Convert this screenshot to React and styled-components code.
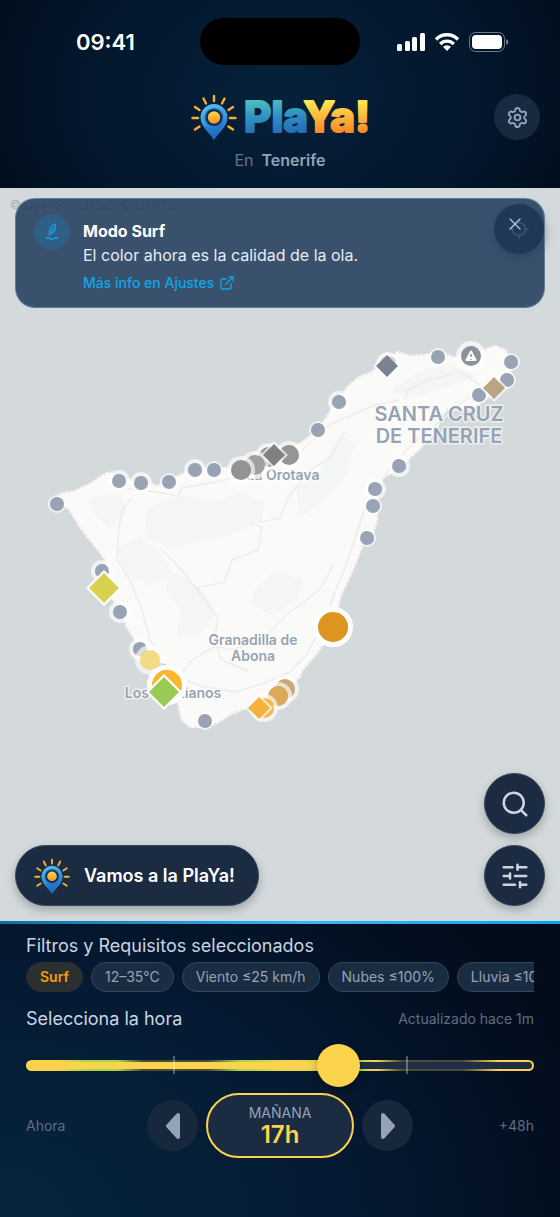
import React, { useState } from 'react';
import styled, { createGlobalStyle, css } from 'styled-components';
import { ExternalLink, Locate, Search, Settings, SlidersHorizontal, X } from 'lucide-react';

const GlobalStyle = createGlobalStyle`
    * {
        box-sizing: border-box;
    }

    body {
        margin: 0;
        background: #020c1b;
        font-family: Inter, 'Liberation Sans', sans-serif;
    }

    button {
        margin: 0;
        padding: 0;
        border: none;
        font-family: inherit;
        cursor: pointer;
    }
`;

const Screen = styled.div`
    display: flex;
    flex-direction: column;
    min-height: 100vh;
`;

const Header = styled.header`
    padding: 18px 20px 16px;
    background: radial-gradient(ellipse 60% 140% at 50% 50%, #06213a 0%, #03162c 60%, #020c1b 100%);
`;

const StatusBar = styled.div`
    display: grid;
    grid-template-columns: 1fr 160px 1fr;
    align-items: center;
    color: #ffffff;
`;

const Clock = styled.span`
    padding-left: 56px;
    font-size: 22px;
    font-weight: 600;
`;

const Notch = styled.div`
    height: 47px;
    border-radius: 24px;
    background: #000000;
`;

const StatusIcons = styled.div`
    display: flex;
    align-items: center;
    gap: 9px;
    padding-left: 37px;
`;

const TitleBar = styled.div`
    display: grid;
    grid-template-columns: 1fr auto 1fr;
    align-items: center;
    margin-top: 29px;
`;

const Brand = styled.h1`
    grid-column: 2;
    display: flex;
    align-items: center;
    gap: 6px;
    margin: 0;
`;

const BrandWord = styled.svg`
    font-family: Inter, 'Liberation Sans', sans-serif;
    font-size: 42px;
    font-weight: 800;
    stroke-width: 2px;
    stroke-linejoin: round;
    overflow: visible;
`;

const GearButton = styled.button`
    justify-self: end;
    display: flex;
    align-items: center;
    justify-content: center;
    width: 46px;
    height: 46px;
    border-radius: 50%;
    background: #172a40;
    color: #94a3b8;
`;

const Place = styled.p`
    display: flex;
    justify-content: center;
    gap: 8px;
    margin: 8px 0 0;
    font-size: 16px;
    line-height: 24px;
    color: #64748b;

    strong {
        font-weight: 600;
        color: #94a3b8;
    }
`;

const MapArea = styled.main`
    position: relative;
    flex: 1;
    display: flex;
    flex-direction: column;
    justify-content: space-between;
    min-height: 640px;
    padding: 10px 15px 15px;
    background: #d4d9dc;
    overflow: hidden;
`;

const MapCanvas = styled.svg`
    position: absolute;
    inset: 0;
    width: 100%;
    height: 100%;
`;

const MapLabel = styled.text`
    font-size: ${({ $size }) => $size}px;
    font-weight: 600;
    fill: #96a4b2;
    stroke: rgba(255, 255, 255, 0.6);
    stroke-width: 3px;
    stroke-linejoin: round;
    paint-order: stroke;
    text-anchor: middle;
`;

const Attribution = styled.small`
    position: absolute;
    top: 9px;
    left: 10px;
    font-size: 12px;
    line-height: 16px;
    color: #a8b0b6;
`;

const LocateButton = styled.button`
    position: absolute;
    top: 16px;
    right: 16px;
    display: flex;
    align-items: center;
    justify-content: center;
    width: 50px;
    height: 50px;
    border-radius: 50%;
    background: #1a2b42;
    color: #cbd5e1;
    box-shadow: 0 4px 12px rgba(0, 0, 0, 0.4);
`;

const Notice = styled.section`
    position: relative;
    display: flex;
    gap: 13px;
    padding: 15px 19px 12px 18px;
    border: 1px solid rgba(125, 155, 185, 0.6);
    border-radius: 20px;
    background: rgba(33, 58, 92, 0.86);
`;

const NoticeIcon = styled.span`
    display: flex;
    align-items: center;
    justify-content: center;
    width: 36px;
    height: 36px;
    border-radius: 50%;
    background: #2f5f85;
`;

const NoticeBody = styled.div`
    flex: 1;
`;

const NoticeTitle = styled.h2`
    margin: 5px 0 0;
    font-size: 16px;
    font-weight: 700;
    line-height: 24px;
    color: #ffffff;
`;

const NoticeText = styled.p`
    margin: 0;
    font-size: 16px;
    line-height: 24px;
    color: #e8edf3;
`;

const NoticeLink = styled.a`
    display: inline-flex;
    align-items: center;
    gap: 5px;
    margin-top: 4px;
    font-size: 14px;
    font-weight: 500;
    line-height: 24px;
    color: #0ea5e9;
    text-decoration: none;
`;

const CloseButton = styled.button`
    display: flex;
    align-items: center;
    justify-content: center;
    width: 20px;
    height: 20px;
    background: transparent;
    color: #b6c2d1;
`;

const MapActions = styled.div`
    position: relative;
    display: flex;
    align-items: flex-end;
    justify-content: space-between;
`;

const ActionStack = styled.div`
    display: flex;
    flex-direction: column;
    gap: 11px;
`;

const floating = css`
    display: flex;
    align-items: center;
    justify-content: center;
    height: 61px;
    border: 1px solid #34465b;
    background: #1a2b42;
    box-shadow: 0 4px 10px rgba(0, 0, 0, 0.25);
`;

const RoundButton = styled.button`
    ${floating}
    width: 61px;
    border-radius: 50%;
    color: #cbd5e1;
`;

const GoButton = styled.button`
    ${floating}
    gap: 14px;
    padding: 0 23px 0 18px;
    border-radius: 31px;
    font-size: 18px;
    font-weight: 600;
    color: #ffffff;
`;

const Panel = styled.footer`
    padding: 10px 26px 59px;
    border-top: 3px solid #1593d4;
    border-image: linear-gradient(90deg, #0b6fa8, #38b6f5 55%, #0ea5e9) 1;
    background: radial-gradient(ellipse 110% 150% at 0% 100%, #06263d 0%, #051a33 55%, #020c1b 100%);
`;

const PanelTitle = styled.h2`
    margin: 0;
    font-size: 18px;
    font-weight: 400;
    line-height: 24px;
    color: #cbd5e1;
`;

const Chips = styled.ul`
    display: flex;
    gap: 8px;
    margin: 4px 0 15px;
    padding: 0;
    list-style: none;
    overflow: hidden;
`;

const Chip = styled.li`
    flex: none;
    height: 30px;
    padding: 0 13px;
    border: 1px solid ${({ $active }) => ($active ? '#2a2f30' : '#36475a')};
    border-radius: 15px;
    background: ${({ $active }) => ($active ? '#2a2f30' : '#1a2c41')};
    font-size: 14px;
    font-weight: ${({ $active }) => ($active ? 600 : 400)};
    line-height: 28px;
    color: ${({ $active }) => ($active ? '#f59e0b' : '#94a3b8')};
`;

const PanelRow = styled.div`
    display: flex;
    align-items: center;
    justify-content: space-between;
`;

const Muted = styled.span`
    font-size: 14px;
    line-height: 20px;
    color: #5f6e84;
`;

const SliderBox = styled.div`
    display: grid;
    align-items: center;
    height: 44px;
    margin: 12px 0 6px;

    > * {
        grid-area: 1 / 1;
    }
`;

const Track = styled.div`
    height: 11px;
    padding: 2px;
    border-radius: 6px;
    background: linear-gradient(
        90deg,
        #fcd34d 6%,
        #a3d64e 12%,
        #a3d64e 18%,
        #4a4c38 23%,
        #4a4c38 36%,
        #a3d64e 42%,
        #fcd34d 52%,
        #a3d64e 65%,
        #fcd34d 69%,
        #4a4c38 74%,
        #4a4c38 86%,
        #fcd34d 93%,
        #fcd34d 100%
    );
`;

const TrackInner = styled.div`
    height: 7px;
    border-radius: 4px;
    background: linear-gradient(90deg, #fcd34d 10px, #1f2e45 10px);
    overflow: hidden;
`;

const TrackFill = styled.div`
    height: 100%;
    background: #fcd34d;
`;

const Ticks = styled.div`
    position: relative;
    height: 18px;
    margin: 0 21px;
`;

const Tick = styled.span`
    position: absolute;
    top: 0;
    width: 2px;
    height: 18px;
    background: rgba(255, 255, 255, 0.3);
`;

const Range = styled.input`
    position: relative;
    appearance: none;
    width: 100%;
    height: 44px;
    margin: 0;
    background: transparent;

    &::-webkit-slider-thumb {
        appearance: none;
        width: 43px;
        height: 43px;
        border-radius: 50%;
        background: #fcd34d;
        box-shadow: 0 2px 8px rgba(0, 0, 0, 0.3);
    }
`;

const Stepper = styled.div`
    display: flex;
    align-items: center;
    gap: 8px;
`;

const StepButton = styled.button`
    display: flex;
    align-items: center;
    justify-content: center;
    width: 51px;
    height: 51px;
    border-radius: 50%;
    background: #17283d;
`;

const Current = styled.output`
    display: flex;
    flex-direction: column;
    align-items: center;
    justify-content: center;
    width: 148px;
    height: 65px;
    border: 2px solid #fcd34d;
    border-radius: 33px;
    background: #1a2b42;
`;

const Day = styled.span`
    font-size: 14px;
    line-height: 18px;
    color: #94a3b8;
`;

const Hour = styled.span`
    font-size: 24px;
    font-weight: 600;
    line-height: 26px;
    color: #fcd34d;
`;

const Side = styled(Muted)`
    flex: 1;
    text-align: ${({ $right }) => ($right ? 'right' : 'left')};
`;

const ISLAND =
    'M57 500L60 494L75 491L90 484L100 477L109 472L118 479L140 482L158 486L170 480L183 474L195 469L214 469' +
    'L240 466L262 458L285 450L300 444L315 432L325 420L336 402L347 388L358 378L370 373L385 362L398 352L410 356' +
    'L425 355L440 352L455 358L470 351L485 350L495 346L505 350L513 362L509 378L497 391L482 402L470 409L447 410' +
    'L440 418L437 430L426 442L413 455L400 467L382 479L376 493L377 520L373 533L363 543L357 560L348 580L340 597' +
    'L338 610L333 630L317 653L302 670L300 677L280 693L260 703L233 713L217 723L203 727L190 727L182 720L178 703' +
    'L168 685L160 670L150 657L137 643L127 627L121 611L113 600L106 584L107 562L98 550L90 540L80 527L70 510Z';

const WOODS = [
    'M150 510L180 498L215 505L240 495L262 503L258 520L230 532L200 538L170 545L148 535Z',
    'M120 550L140 540L158 556L170 572L150 582L128 572Z',
    'M168 575L185 580L200 592L212 612L200 630L180 634L184 610L170 592Z',
    'M258 590L275 575L300 582L296 597L272 612L255 603Z',
    'M300 490L325 470L340 440L352 444L342 476L318 502L302 512Z',
    'M396 390L420 374L450 368L470 376L440 386L412 394Z',
    'M92 500L118 497L124 512L110 524L98 514Z',
];

const ROADS = [
    'M110 487L140 490L158 492L178 496L182 488L215 482L245 476L275 466L300 452L330 425L352 415L375 405L400 400',
    'M132 498L122 510L118 535L117 560L130 580L142 610L150 640L162 660L178 676L200 686L235 692L262 684L290 672' +
        'L306 655L324 622L336 590L348 560L356 535L366 505L392 465L412 445L436 425L460 404L494 380',
    'M250 522L262 528L258 550L232 560L224 582L196 588L180 568L160 548',
    'M196 588L218 618L214 640L222 660L250 672',
    'M405 400L408 390L430 380L460 372L480 385',
    'M180 676L192 660L215 646L232 650L262 640L290 612L320 590L333 565',
    'M260 522L280 518L288 498L310 470L330 458L345 432',
];

const Pin = ({ id, size }) => (
    <svg width={size} height={size} viewBox="0 0 46 46" aria-hidden="true">
        <defs>
            <linearGradient id={`${id}-body`} x1="0" y1="0" x2="0.3" y2="1">
                <stop offset="0" stopColor="#5cc8ee" />
                <stop offset="0.5" stopColor="#3a9be0" />
                <stop offset="1" stopColor="#1e6fc4" />
            </linearGradient>
            <linearGradient id={`${id}-sun`} x1="0" y1="0" x2="0" y2="1">
                <stop offset="0" stopColor="#ffd447" />
                <stop offset="1" stopColor="#f7932a" />
            </linearGradient>
        </defs>
        <path
            d="M23 2V7M12.5 4.5L15 9.5M33.5 4.5L31 9.5M4 13L8.5 16M42 13L37.5 16M1.5 24H7M44.5 24H39M4 35.5L8.5 32.5M42 35.5L37.5 32.5"
            stroke="#fbb02d"
            strokeWidth="2.4"
            strokeLinecap="round"
        />
        <path d="M23 46C19 39 9.5 33 9.5 23.5A13.5 13.5 0 0 1 36.5 23.5C36.5 33 27 39 23 46Z" fill={`url(#${id}-body)`} />
        <path d="M12 31C18 35 27 34 32 29C33 33 26 38 23 46C20 40 14 36 12 31Z" fill="#1d63b8" opacity="0.35" />
        <circle cx="23" cy="23.5" r="9.5" fill="#1f63b0" />
        <circle cx="23" cy="23.5" r="8" fill="#0b2545" />
        <circle cx="23" cy="23.5" r="6.2" fill={`url(#${id}-sun)`} />
    </svg>
);

const Wordmark = () => (
    <BrandWord width="126" height="46" viewBox="0 0 126 46">
        <defs>
            <linearGradient id="sea" x1="0" y1="0" x2="0.2" y2="1">
                <stop offset="0.2" stopColor="#4cc0c0" />
                <stop offset="0.5" stopColor="#2f93c4" />
                <stop offset="0.9" stopColor="#2268b4" />
            </linearGradient>
            <linearGradient id="sand" x1="0" y1="0" x2="0" y2="1">
                <stop offset="0.2" stopColor="#ffe650" />
                <stop offset="0.8" stopColor="#fb8a24" />
            </linearGradient>
        </defs>
        <text x="1" y="38">
            <tspan fill="url(#sea)" stroke="url(#sea)">Pla</tspan>
            <tspan fill="url(#sand)" stroke="url(#sand)">Ya!</tspan>
        </text>
    </BrandWord>
);

const SurfIcon = () => (
    <svg width="16" height="18" viewBox="0 0 16 18" fill="none" stroke="#0ea5e9" strokeWidth="1.3" strokeLinecap="round" strokeLinejoin="round">
        <path d="M11 1C7 2.5 4.5 7 5.5 12C10 10 12.5 6 11 1ZM9.5 5L7 9.5" />
        <path d="M2 15.5Q4 14 6 15.5T10 15.5T14 15.5" />
    </svg>
);

// x, y, width of the white ring
const smallDots = [
    [57, 504, 2], [119, 481, 4], [141, 483, 4], [169, 482, 2], [195, 470, 4], [214, 470, 2], [318, 430, 2],
    [339, 402, 4], [438, 357, 2], [511, 362, 2], [507, 380, 2], [479, 395, 2], [399, 466, 4], [375, 489, 4],
    [373, 506, 2], [367, 538, 2], [102, 571, 4], [120, 612, 4], [140, 649, 4], [161, 670, 2], [205, 721, 2],
];

const Dot = ({ x, y, r = 7, ring = 2, color = '#98a3b4', ringOpacity = 0.65 }) => (
    <g>
        <circle cx={x} cy={y} r={r + ring / 2} fill="none" stroke="#ffffff" strokeWidth={ring} opacity={ringOpacity} />
        <circle cx={x} cy={y} r={r} fill={color} />
    </g>
);

const Diamond = ({ x, y, r, ring = 3, color, ringOpacity = 0.65 }) => (
    <g>
        <path
            d={`M${x} ${y - r - ring}L${x + r + ring} ${y}L${x} ${y + r + ring}L${x - r - ring} ${y}Z`}
            fill="#ffffff"
            opacity={ringOpacity}
        />
        <path d={`M${x} ${y - r}L${x + r} ${y}L${x} ${y + r}L${x - r} ${y}Z`} fill={color} />
    </g>
);

const IslandMap = () => (
    <MapCanvas viewBox="0 188 560 733" preserveAspectRatio="xMidYMid slice" role="img" aria-label="Tenerife">
        <path d={ISLAND} fill="#fafaf8" stroke="#fafaf8" strokeWidth="2" strokeLinejoin="round" />
        <path d={ISLAND} fill="none" stroke="#e9bcbc" strokeWidth="1" strokeDasharray="2 3" opacity="0.7" />
        {WOODS.map((d) => (
            <path key={d} d={d} fill="#f4f6f4" stroke="#f4f6f4" strokeWidth="6" strokeLinejoin="round" />
        ))}
        {ROADS.map((d) => (
            <path key={d} d={d} fill="none" stroke="#ebeded" strokeWidth="1.5" strokeLinejoin="round" />
        ))}
        <MapLabel x="439" y="421" $size={20}>SANTA CRUZ</MapLabel>
        <MapLabel x="439" y="443" $size={20}>DE TENERIFE</MapLabel>
        <MapLabel x="283" y="480" $size={14}>La Orotava</MapLabel>
        <MapLabel x="253" y="645" $size={14}>Granadilla de</MapLabel>
        <MapLabel x="253" y="661" $size={14}>Abona</MapLabel>
        <MapLabel x="173" y="698" $size={14}>Los Cristianos</MapLabel>

        {smallDots.map(([x, y, ring]) => (
            <Dot key={`${x}-${y}`} x={x} y={y} ring={ring} />
        ))}
        <Dot x={289} y={455} r={10} ring={4} color="#959595" />
        <Dot x={269} y={457} r={10} ring={4} color="#8c8c8c" />
        <Dot x={255} y={465} r={10} ring={4} color="#a0a0a0" />
        <Dot x={241} y={470} r={10} ring={4} color="#939393" />
        <Diamond x={274} y={455} r={11} color="#808080" />
        <Dot x={388} y={364} r={8} ring={4} color="#7f899b" />
        <Diamond x={387} y={366} r={11} color="#7b8291" />
        <Diamond x={494} y={388} r={11} color="#b9a581" />
        <Dot x={471} y={356} r={10} ring={5} color="#8c919c" />
        <path d="M471 351.5L475.5 360H466.5Z" fill="#ffffff" stroke="#ffffff" strokeWidth="2" strokeLinejoin="round" />
        <path d="M471 354V357M471 359V360" stroke="#8c919c" strokeWidth="1.5" />
        <Dot x={150} y={660} r={10} ring={5} color="#f1dc83" />
        <Dot x={167} y={685} r={15} ring={5} color="#fbb62c" ringOpacity={1} />
        <Diamond x={164} y={692} r={15} color="#98cb54" ringOpacity={1} />
        <Diamond x={104} y={588} r={15} color="#d8d04f" ringOpacity={1} />
        <Dot x={333} y={627} r={15} ring={5} color="#dc9520" ringOpacity={1} />
        <Dot x={285} y={689} r={10} ring={4} color="#c9a873" />
        <Dot x={278} y={696} r={10} ring={4} color="#dba957" />
        <Dot x={264} y={708} r={10} ring={4} color="#f3b74f" />
        <Diamond x={259} y={708} r={11} color="#f5b23d" />
    </MapCanvas>
);

const FILTERS = ['Surf', '12–35°C', 'Viento ≤25 km/h', 'Nubes ≤100%', 'Lluvia ≤10%'];
const RANGE_HOURS = 48;
const START_HOUR = 11;
const MIDNIGHTS = [13, 37];
const DAYS = ['HOY', 'MAÑANA', 'PASADO'];

function App() {
    const [offset, setOffset] = useState(30);
    const [showNotice, setShowNotice] = useState(true);

    const total = START_HOUR + offset;
    const percent = (offset / RANGE_HOURS) * 100;
    const move = (step) => setOffset(Math.min(RANGE_HOURS, Math.max(0, offset + step)));

    return (
        <Screen>
            <GlobalStyle />
            <Header>
                <StatusBar>
                    <Clock>09:41</Clock>
                    <Notch />
                    <StatusIcons>
                        <svg width="28" height="20" viewBox="0 0 28 20" fill="#ffffff">
                            <rect x="0" y="12" width="5" height="7" rx="1.5" />
                            <rect x="8" y="9" width="5" height="10" rx="1.5" />
                            <rect x="15" y="5" width="5" height="14" rx="1.5" />
                            <rect x="23" y="1" width="5" height="18" rx="1.5" />
                        </svg>
                        <svg width="26" height="20" viewBox="0 0 26 20" fill="none" stroke="#ffffff" strokeWidth="3.4">
                            <path d="M2 7.5C8 1.2 18 1.2 24 7.5" />
                            <path d="M6.2 12C10 8.2 16 8.2 19.8 12" />
                            <path d="M9 14.8Q13 11.5 17 14.8L13 19Z" fill="#ffffff" stroke="none" />
                        </svg>
                        <svg width="40" height="20" viewBox="0 0 40 20">
                            <rect x="0.5" y="0.5" width="35" height="19" rx="6" fill="none" stroke="#6d7a8a" />
                            <rect x="3" y="3" width="30" height="14" rx="4" fill="#ffffff" />
                            <path d="M37 7Q39.5 8 39.5 10T37 13Z" fill="#6d7a8a" />
                        </svg>
                    </StatusIcons>
                </StatusBar>
                <TitleBar>
                    <Brand>
                        <Pin id="brand" size={46} />
                        <Wordmark />
                    </Brand>
                    <GearButton aria-label="Ajustes">
                        <Settings size={23} strokeWidth={2} />
                    </GearButton>
                </TitleBar>
                <Place>
                    En <strong>Tenerife</strong>
                </Place>
            </Header>

            <MapArea>
                <IslandMap />
                <Attribution>© OpenStreetMap &nbsp;© CARTO</Attribution>
                <LocateButton aria-label="Mi ubicación">
                    <Locate size={22} />
                </LocateButton>
                {showNotice && (
                    <Notice>
                        <NoticeIcon>
                            <SurfIcon />
                        </NoticeIcon>
                        <NoticeBody>
                            <NoticeTitle>Modo Surf</NoticeTitle>
                            <NoticeText>El color ahora es la calidad de la ola.</NoticeText>
                            <NoticeLink href="#ajustes">
                                Más info en Ajustes <ExternalLink size={16} />
                            </NoticeLink>
                        </NoticeBody>
                        <CloseButton aria-label="Cerrar" onClick={() => setShowNotice(false)}>
                            <X size={20} strokeWidth={1.5} />
                        </CloseButton>
                    </Notice>
                )}
                <MapActions>
                    <GoButton>
                        <Pin id="go" size={36} />
                        Vamos a la PlaYa!
                    </GoButton>
                    <ActionStack>
                        <RoundButton aria-label="Buscar">
                            <Search size={30} strokeWidth={2} />
                        </RoundButton>
                        <RoundButton aria-label="Filtros">
                            <SlidersHorizontal size={30} strokeWidth={2} />
                        </RoundButton>
                    </ActionStack>
                </MapActions>
            </MapArea>

            <Panel>
                <PanelTitle>Filtros y Requisitos seleccionados</PanelTitle>
                <Chips>
                    {FILTERS.map((name, i) => (
                        <Chip key={name} $active={i === 0}>
                            {name}
                        </Chip>
                    ))}
                </Chips>
                <PanelRow>
                    <PanelTitle as="label" htmlFor="hour">
                        Selecciona la hora
                    </PanelTitle>
                    <Muted>Actualizado hace 1m</Muted>
                </PanelRow>
                <SliderBox>
                    <Track>
                        <TrackInner>
                            <TrackFill style={{ width: `${percent}%` }} />
                        </TrackInner>
                    </Track>
                    <Ticks>
                        {MIDNIGHTS.map((hour) => (
                            <Tick key={hour} style={{ left: `${(hour / RANGE_HOURS) * 100}%` }} />
                        ))}
                    </Ticks>
                    <Range
                        id="hour"
                        type="range"
                        min="0"
                        max={RANGE_HOURS}
                        value={offset}
                        onChange={(e) => setOffset(Number(e.target.value))}
                    />
                </SliderBox>
                <Stepper>
                    <Side>Ahora</Side>
                    <StepButton aria-label="Hora anterior" onClick={() => move(-1)}>
                        <svg width="16" height="28" viewBox="0 0 16 28">
                            <path d="M13 3V25L3 14Z" fill="#94a3b8" stroke="#94a3b8" strokeWidth="4" strokeLinejoin="round" />
                        </svg>
                    </StepButton>
                    <Current htmlFor="hour">
                        <Day>{DAYS[Math.floor(total / 24)]}</Day>
                        <Hour>{total % 24}h</Hour>
                    </Current>
                    <StepButton aria-label="Hora siguiente" onClick={() => move(1)}>
                        <svg width="16" height="28" viewBox="0 0 16 28">
                            <path d="M3 3V25L13 14Z" fill="#94a3b8" stroke="#94a3b8" strokeWidth="4" strokeLinejoin="round" />
                        </svg>
                    </StepButton>
                    <Side $right>+48h</Side>
                </Stepper>
            </Panel>
        </Screen>
    );
}

export default App;
